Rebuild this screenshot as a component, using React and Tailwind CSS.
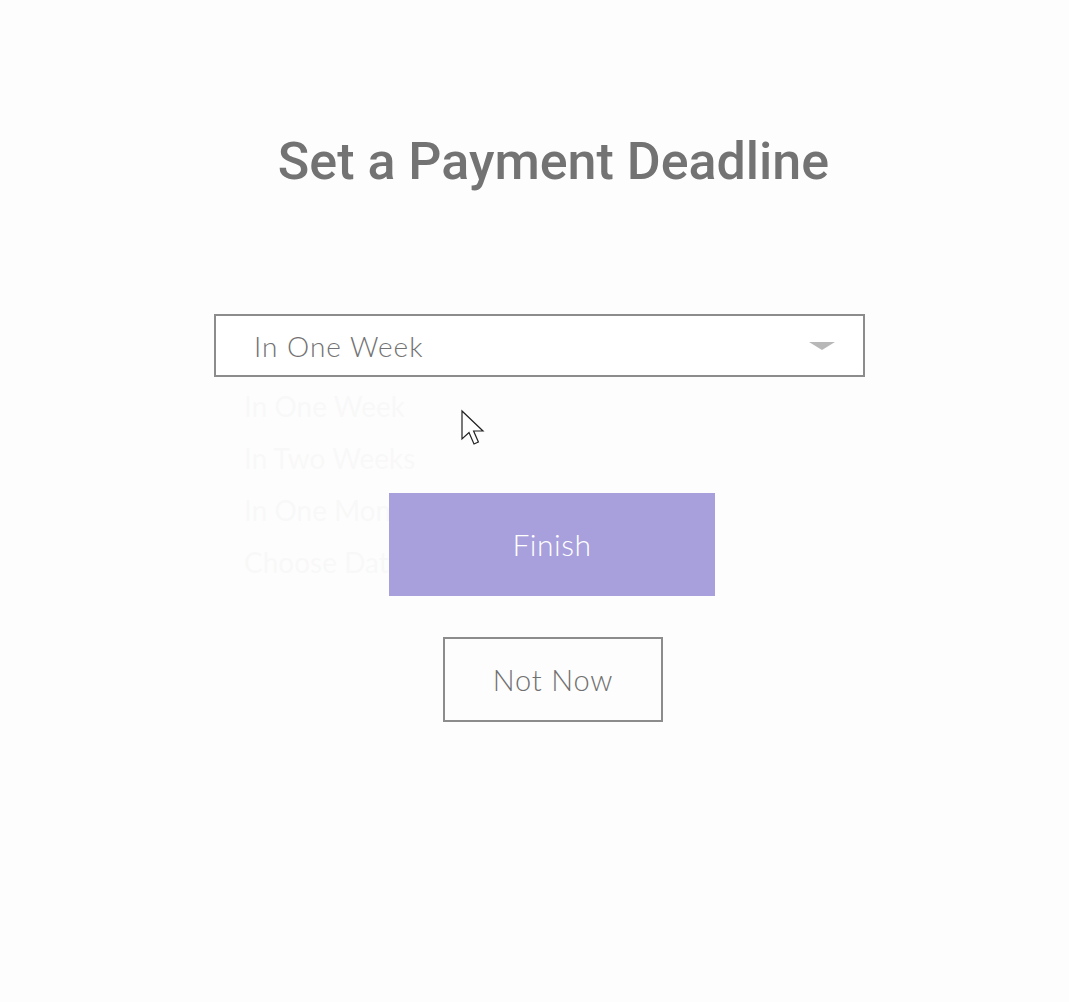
import React from "react";

const quick = { fontFamily: "Lato, 'Open Sans', sans-serif" };

const Cursor = () => (
  <svg width="26" height="38" viewBox="0 0 13 19" className="absolute left-[460px] top-[409px]">
    <path d="M1 1 L1 15 L4.5 11.8 L7 17.5 L9.2 16.5 L6.8 11 L11.5 11 Z" fill="#fff" stroke="#222" strokeWidth="0.6" strokeLinejoin="miter" />
  </svg>
);

const App = () => {
  const ghost = ["In One Week", "In Two Weeks", "In One Month", "Choose Date"];

  return (
    <div className="relative w-[1069px] h-[1002px] bg-[#fdfdfd] overflow-hidden" style={quick}>
      <div className="flex flex-col items-center pt-[130px]">
        <h1 className="text-[52px] leading-[64px] font-medium text-[#737373] ml-[38px]" style={{ fontFamily: "Roboto, sans-serif" }}>
          Set a Payment Deadline
        </h1>

        {/* Dropdown */}
        <div className="relative mt-[120px] w-[651px] ml-[10px]">
          <div className="h-[63px] border-2 border-[#8c8c8c] bg-white flex items-center justify-between pl-[38px] pr-[28px]">
            <span className="text-[28px] font-light text-[#727272] tracking-[1px]">In One Week</span>
            <span className="w-0 h-0 border-l-[13px] border-r-[13px] border-t-[8px] border-l-transparent border-r-transparent border-t-[#b8b8b8]" />
          </div>

          {/* fading options list */}
          <div className="absolute left-[-4px] right-[-4px] top-[66px] flex flex-col opacity-[0.015] bg-white">
            {ghost.map((g) => (
              <div key={g} className="h-[52px] flex items-center pl-[34px] text-[28px] text-[#222]">
                {g}
              </div>
            ))}
          </div>
        </div>

        {/* Finish */}
        <button className="relative mt-[116px] w-[326px] h-[103px] bg-[#a8a0dc] text-white text-[30px] font-light tracking-[0.5px] flex items-center justify-center ml-[35px]">
          Finish
        </button>

        {/* Not now */}
        <button className="mt-[41px] w-[220px] h-[85px] border-2 border-[#8c8c8c] text-[#707070] text-[29px] font-light tracking-[0.8px] flex items-center justify-center ml-[37px]">
          Not Now
        </button>
      </div>

      <Cursor />
    </div>
  );
};

export default App;
